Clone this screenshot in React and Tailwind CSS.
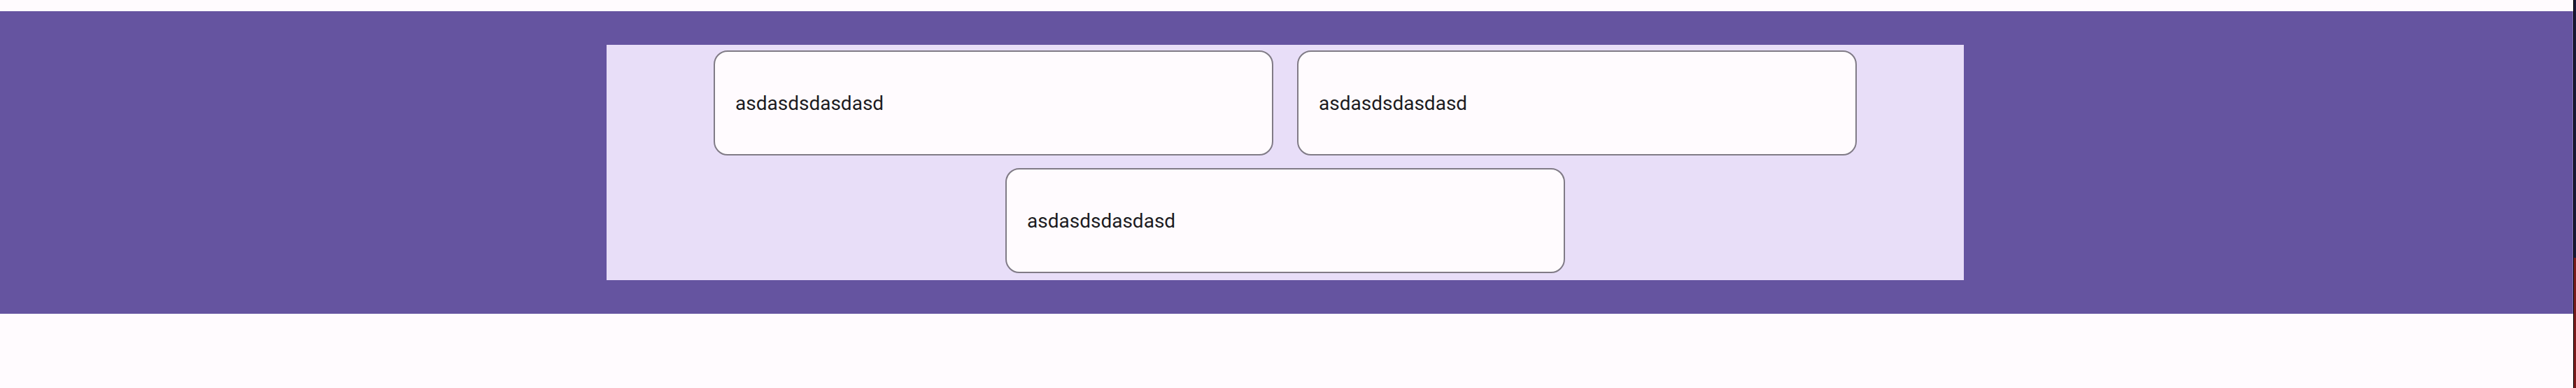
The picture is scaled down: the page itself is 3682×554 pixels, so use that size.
const items = ['asdasdsdasdasd', 'asdasdsdasdasd', 'asdasdsdasdasd']

function Card({ text }) {
  return (
    <div className="w-[800px] h-[150px] flex items-center pl-[29px] pt-[2px] rounded-[20px] border-2 border-[#807b86] bg-[#fffbfe]">
      <span className="text-[28px] leading-none text-[#1c1b1f]">{text}</span>
    </div>
  )
}

export default function App() {
  return (
    <div className="flex w-[3682px] h-[554px] overflow-hidden" style={{ fontFamily: 'Roboto, "Noto Sans", sans-serif' }}>
      {/* page */}
      <div className="flex-1 flex flex-col bg-[#fffbfe] pt-[16px]">
        <div className="h-[432px] flex justify-center items-start pt-[48px] pr-[3px] bg-[#6554a0] border-r border-[#8676b8]">
          <div className="w-[1940px] h-[336px] bg-[#e8def8] flex flex-wrap justify-center content-start gap-x-[34px] gap-y-[18px] pt-[8px]">
            {items.map((t, i) => (
              <Card key={i} text={t} />
            ))}
          </div>
        </div>
      </div>

      {/* window edge */}
      <div className="w-[4px] flex flex-col border-l border-black">
        <div className="h-[368px] bg-[#1a1936]" />
        <div className="flex-1 bg-[#7a1c1c]" />
      </div>
    </div>
  )
}
